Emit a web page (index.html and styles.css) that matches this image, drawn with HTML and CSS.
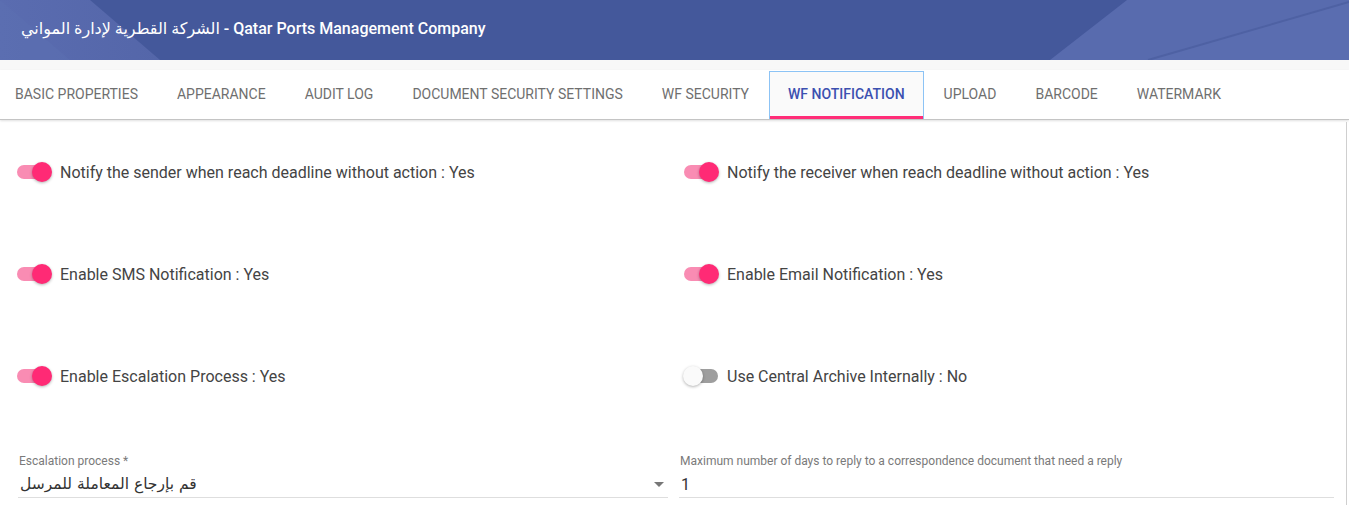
FILE: index.html
```html
<!DOCTYPE html>
<html>
<head>
<meta charset="utf-8">
<link rel="stylesheet" href="styles.css">
</head>
<body>
<header class="topbar">
  <svg class="topbar-deco" width="1349" height="60" viewBox="0 0 1349 60" preserveAspectRatio="none">
    <defs>
      <linearGradient id="gl" x1="0" y1="0" x2="1" y2="0">
        <stop offset="0" stop-color="#5a6cb0"/>
        <stop offset="1" stop-color="#5466a9"/>
      </linearGradient>
    </defs>
    <polygon points="0,0 90,0 160,60 0,60" fill="url(#gl)"/>
    <polygon points="0,0 0,60 70,60" fill="#5c6fb2" opacity="0.5"/>
    <polygon points="1127,0 1349,0 1349,60 1050,60" fill="#586bae"/>
    <polygon points="1349,2 1349,60 1148,60" fill="#5a6db0"/>
    <line x1="1148" y1="60" x2="1349" y2="2" stroke="#4e61a3" stroke-width="2"/>
  </svg>
  <h1 class="topbar-title" dir="ltr"><span dir="rtl">الشركة القطرية لإدارة المواني</span> - Qatar Ports Management Company</h1>
</header>
<div class="strip"></div>
<nav class="tabs">
  <div class="tab first">BASIC PROPERTIES</div>
  <div class="tab">APPEARANCE</div>
  <div class="tab">AUDIT LOG</div>
  <div class="tab">DOCUMENT SECURITY SETTINGS</div>
  <div class="tab">WF SECURITY</div>
  <div class="tab active">WF NOTIFICATION</div>
  <div class="tab">UPLOAD</div>
  <div class="tab">BARCODE</div>
  <div class="tab">WATERMARK</div>
</nav>
<main class="card">
  <div class="grid">
    <div class="toggle-row"><span class="switch on"><span class="knob"></span></span><span class="tlabel">Notify the sender when reach deadline without action : Yes</span></div>
    <div class="toggle-row"><span class="switch on"><span class="knob"></span></span><span class="tlabel">Notify the receiver when reach deadline without action : Yes</span></div>
    <div class="toggle-row"><span class="switch on"><span class="knob"></span></span><span class="tlabel">Enable SMS Notification : Yes</span></div>
    <div class="toggle-row"><span class="switch on"><span class="knob"></span></span><span class="tlabel">Enable Email Notification : Yes</span></div>
    <div class="toggle-row"><span class="switch on"><span class="knob"></span></span><span class="tlabel">Enable Escalation Process : Yes</span></div>
    <div class="toggle-row"><span class="switch off"><span class="knob"></span></span><span class="tlabel">Use Central Archive Internally : No</span></div>
  </div>
  <div class="fields">
    <div class="field select">
      <div class="flabel">Escalation process *</div>
      <div class="fvalue"><span class="arabic" dir="rtl">قم بإرجاع المعاملة للمرسل</span><span class="caret"></span></div>
    </div>
    <div class="field">
      <div class="flabel">Maximum number of days to reply to a correspondence document that need a reply</div>
      <div class="fvalue"><span>1</span></div>
    </div>
  </div>
</main>
</body>
</html>
```
FILE: styles.css
```css
* { box-sizing: border-box; }
html, body { margin: 0; padding: 0; }
body {
  width: 1349px;
  height: 505px;
  overflow: hidden;
  background: #fff;
  font-family: Roboto, "Noto Sans", "DejaVu Sans", sans-serif;
}
.topbar {
  position: relative;
  height: 60px;
  background: #44589b;
  display: flex;
  align-items: center;
  padding-left: 21px;
}
.topbar-deco { position: absolute; left: 0; top: 0; }
.topbar-title {
  position: relative;
  margin: 0;
  color: #fff;
  font-size: 16px;
  font-weight: 500;
  margin-top: -4px;
}
.strip { height: 10px; background: #f8f8f8; }
.tabs {
  display: flex;
  height: 50px;
  border-bottom: 1px solid #c4c4c4;
  box-shadow: 0 1px 2px rgba(0,0,0,0.12);
  background: #fff;
  padding-top: 1px;
}
.tab {
  display: flex;
  align-items: center;
  padding: 0 18.5px 3px;
  height: 48px;
  font-size: 14px;
  color: #6f6f6f;
  border: 1px solid transparent;
  border-bottom: 0;
}
.tab.first { padding-left: 14px; }
.tab.active {
  color: #3c50b0;
  font-weight: 500;
  background: #fafafa;
  border-color: #8cc3f5;
  box-shadow: inset 0 -3px 0 #ff2d78;
}
.card {
  height: 385px;
  border-right: 1px solid #cfcfcf;
  margin-right: 2px;
  margin-top: 2px;
}
.grid {
  display: grid;
  grid-template-columns: 667px 667px;
  row-gap: 78px;
  padding: 38px 0 0 17px;
}
.toggle-row {
  display: flex;
  align-items: center;
  height: 24px;
}
.switch {
  position: relative;
  width: 34px;
  height: 14px;
  border-radius: 7px;
  margin-right: 9px;
  flex: none;
}
.switch.on { background: #f98cb3; }
.switch.off { background: #9e9e9e; }
.knob {
  position: absolute;
  top: -3px;
  width: 20px;
  height: 20px;
  border-radius: 50%;
  box-shadow: 0 1px 3px rgba(0,0,0,0.3);
}
.switch.on .knob { right: -1px; background: #ff2a75; }
.switch.off .knob { left: -1px; background: #fafafa; }
.tlabel {
  font-size: 16px;
  color: #444;
}
.fields {
  display: flex;
  gap: 11px;
  padding: 66px 0 0 18px;
}
.field {
  width: 650px;
}
.field + .field { width: 655px; }
.flabel {
  font-size: 12px;
  color: #7a7a7a;
  line-height: 14px;
  padding-left: 1px;
  white-space: nowrap;
}
.fvalue {
  display: flex;
  align-items: center;
  justify-content: space-between;
  height: 30px;
  border-bottom: 1px solid #dedede;
  font-size: 16px;
  color: #333;
  padding: 3px 2px 0 2px;
}
.arabic { font-family: "DejaVu Sans", "Noto Sans", sans-serif; font-size: 15.5px; }
.caret {
  width: 0; height: 0;
  border-left: 5px solid transparent;
  border-right: 5px solid transparent;
  border-top: 5px solid #777;
  margin-right: 2px;
}
```
